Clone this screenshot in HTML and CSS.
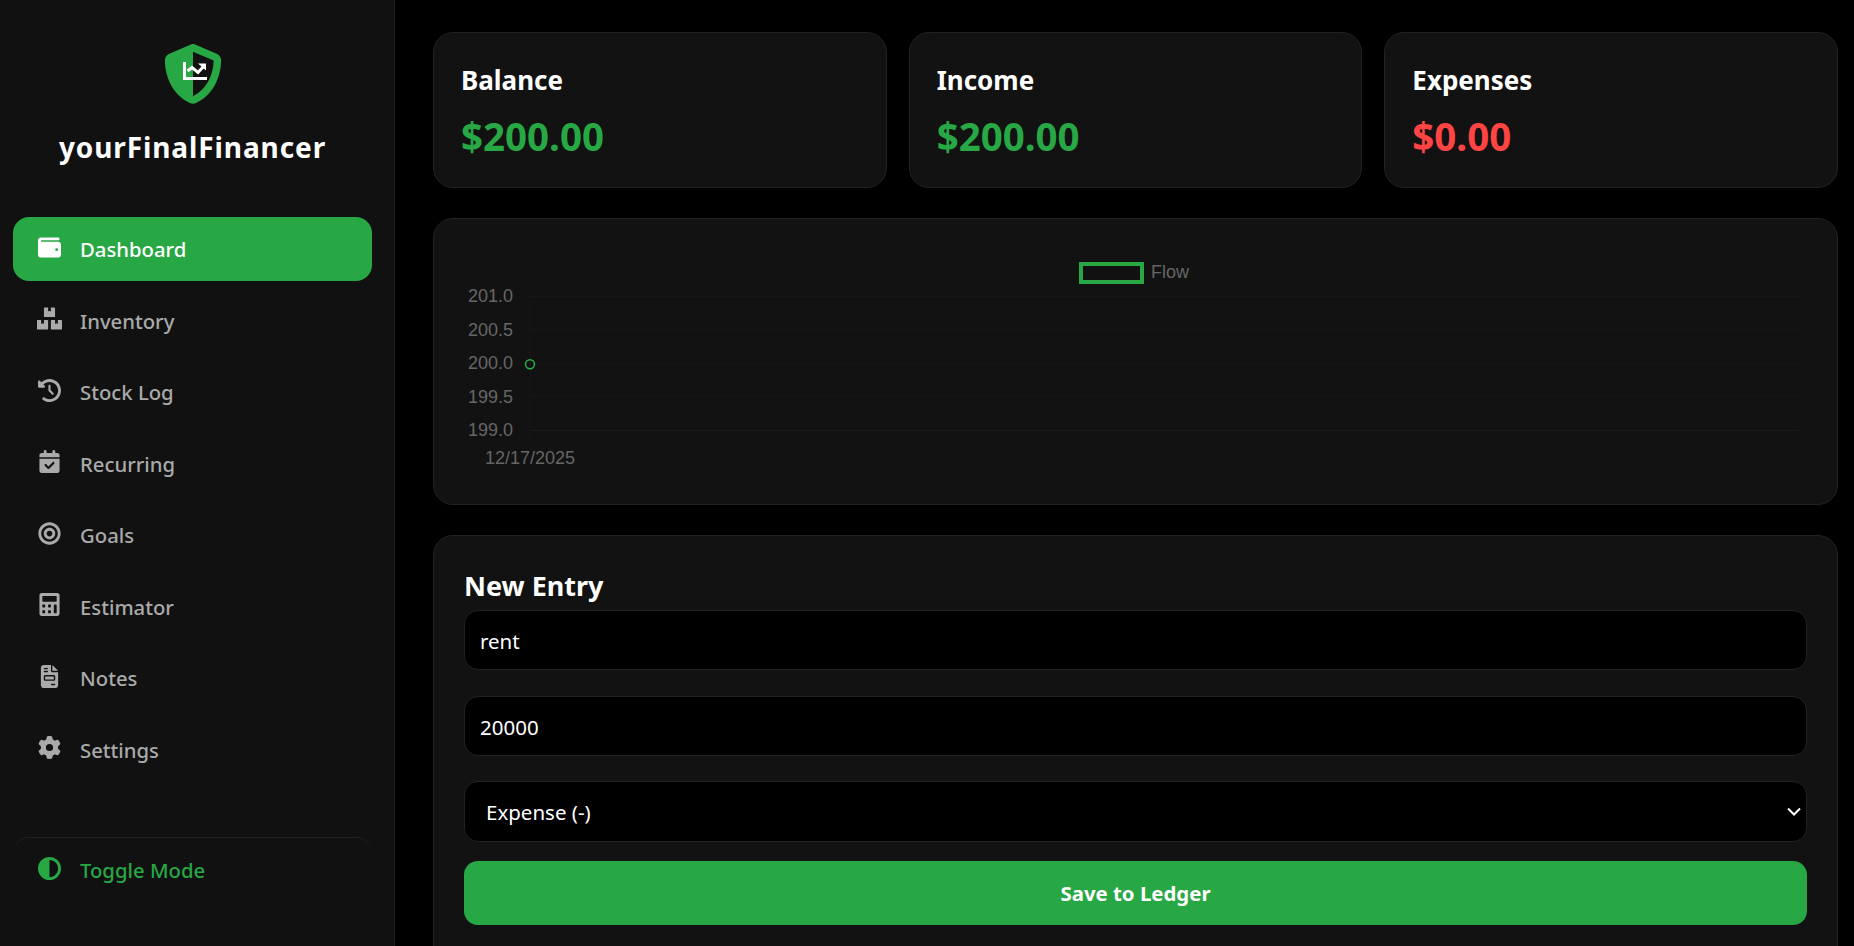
FILE: index.html
```html
<!DOCTYPE html>
<html lang="en">
<head>
<meta charset="utf-8">
<title>yourFinalFinancer</title>
<link rel="stylesheet" href="styles.css">
</head>
<body>
<div class="app">
  <aside class="sidebar">
    <div class="brand">
      <div class="logo">
        <svg class="shield" viewBox="0 0 512 512"><path d="M256 0c4.6 0 9.2 1 13.4 2.9L457.7 82.8c22 9.3 38.4 31 38.3 57.2c-.5 99.2-41.3 280.7-213.6 363.2c-16.7 8-36.1 8-52.8 0C57.3 420.7 16.5 239.2 16 140c-.1-26.2 16.3-47.9 38.3-57.2L242.7 2.9C246.8 1 251.4 0 256 0zm0 66.8V444.8C394 378 431.1 230.1 432 141.4L256 66.8l0 0z"/></svg>
        <svg class="trend" viewBox="0 0 24 18"><path class="trend-axis" d="M1.500 0V16.500H24"/><path class="trend-line" d="M4.500 9L9 5.500L15 10.500L20.500 4.500"/><path class="trend-head" d="M15 1.500H23V8.500Z"/></svg>
      </div>
      <h1 class="brand-name">yourFinalFinancer</h1>
    </div>
    <nav class="nav">
      <a class="nav-item active"><svg class="icon" viewBox="0 0 512 512"><path d="M64 32C28.700 32 0 60.700 0 96V416c0 35.300 28.700 64 64 64H448c35.300 0 64-28.700 64-64V192c0-35.300-28.700-64-64-64H80c-8.800 0-16-7.200-16-16s7.200-16 16-16H448c17.700 0 32-14.300 32-32s-14.300-32-32-32H64zM416 272a32 32 0 1 1 0 64 32 32 0 1 1 0-64z"/></svg>Dashboard</a>
      <a class="nav-item"><svg class="icon" viewBox="0 0 576 512"><path d="M560 288h-80v96l-32-21.300-32 21.300v-96h-80c-8.800 0-16 7.200-16 16v192c0 8.800 7.200 16 16 16h224c8.800 0 16-7.200 16-16V304c0-8.800-7.200-16-16-16zm-384-64h224c8.800 0 16-7.200 16-16V16c0-8.800-7.200-16-16-16h-80v96l-32-21.300L256 96V0h-80c-8.800 0-16 7.200-16 16v192c0 8.800 7.200 16 16 16zm64 64h-80v96l-32-21.300L96 384v-96H16c-8.800 0-16 7.200-16 16v192c0 8.800 7.200 16 16 16h224c8.800 0 16-7.200 16-16V304c0-8.800-7.200-16-16-16z"/></svg>Inventory</a>
      <a class="nav-item"><svg class="icon" viewBox="0 0 512 512"><path d="M75 75L41 41C25.900 25.900 0 36.600 0 57.900V168c0 13.300 10.700 24 24 24H134.100c21.400 0 32.100-25.900 17-41l-30.800-30.800C155 85.500 203 64 256 64c106 0 192 86 192 192s-86 192-192 192c-40.800 0-78.600-12.700-109.700-34.400c-14.500-10.100-34.400-6.600-44.600 7.900s-6.600 34.400 7.900 44.600C151.200 495 201.700 512 256 512c141.400 0 256-114.600 256-256S397.400 0 256 0C185.300 0 121.300 28.700 75 75zm181 53c-13.300 0-24 10.700-24 24V256c0 6.400 2.500 12.500 7 17l72 72c9.400 9.400 24.600 9.400 33.900 0s9.400-24.600 0-33.900l-65-65V152c0-13.300-10.700-24-24-24z"/></svg>Stock Log</a>
      <a class="nav-item"><svg class="icon" viewBox="0 0 448 512"><path d="M128 0c17.700 0 32 14.300 32 32V64H288V32c0-17.700 14.300-32 32-32s32 14.300 32 32V64h48c26.500 0 48 21.500 48 48v48H0V112C0 85.500 21.500 64 48 64H96V32c0-17.700 14.300-32 32-32zM0 192H448V464c0 26.500-21.500 48-48 48H48c-26.500 0-48-21.500-48-48V192zM329 305c9.400-9.400 9.400-24.600 0-33.900s-24.600-9.400-33.900 0l-95 95-47-47c-9.400-9.400-24.600-9.400-33.900 0s-9.400 24.600 0 33.900l64 64c9.400 9.400 24.600 9.400 33.900 0L329 305z"/></svg>Recurring</a>
      <a class="nav-item"><svg class="icon" viewBox="0 0 496 512"><path d="M248 8C111.030 8 0 119.030 0 256s111.030 248 248 248 248-111.030 248-248S384.970 8 248 8zm0 432c-101.690 0-184-82.290-184-184 0-101.690 82.290-184 184-184 101.690 0 184 82.290 184 184 0 101.690-82.290 184-184 184zm0-312c-70.690 0-128 57.310-128 128s57.310 128 128 128 128-57.310 128-128-57.310-128-128-128zm0 192c-35.290 0-64-28.710-64-64s28.710-64 64-64 64 28.710 64 64-28.710 64-64 64z"/></svg>Goals</a>
      <a class="nav-item"><svg class="icon" viewBox="0 0 448 512"><path d="M400 0H48C22.400 0 0 22.400 0 48v416c0 25.600 22.400 48 48 48h352c25.600 0 48-22.400 48-48V48C448 22.400 425.600 0 400 0zM128 435.200c0 6.400-6.400 12.800-12.800 12.800H76.800c-6.400 0-12.800-6.400-12.800-12.800v-38.400c0-6.400 6.400-12.800 12.800-12.800h38.400c6.400 0 12.800 6.400 12.800 12.800v38.400zm0-128c0 6.400-6.400 12.800-12.800 12.800H76.800c-6.400 0-12.800-6.400-12.800-12.800v-38.400c0-6.400 6.400-12.800 12.800-12.800h38.400c6.400 0 12.800 6.400 12.800 12.800v38.400zm128 128c0 6.400-6.400 12.800-12.800 12.800h-38.400c-6.400 0-12.800-6.400-12.800-12.800v-38.400c0-6.400 6.400-12.800 12.800-12.800h38.400c6.400 0 12.800 6.400 12.800 12.800v38.400zm0-128c0 6.400-6.400 12.800-12.800 12.800h-38.400c-6.400 0-12.800-6.400-12.800-12.800v-38.400c0-6.400 6.400-12.800 12.800-12.800h38.400c6.400 0 12.800 6.400 12.800 12.800v38.400zm128 128c0 6.400-6.400 12.800-12.800 12.800h-38.400c-6.400 0-12.800-6.400-12.800-12.800V268.800c0-6.400 6.400-12.800 12.800-12.800h38.400c6.400 0 12.800 6.400 12.800 12.800v166.400zm0-256c0 6.400-6.400 12.800-12.800 12.800H76.800c-6.400 0-12.800-6.400-12.800-12.800V76.800C64 70.400 70.400 64 76.800 64h294.400c6.400 0 12.800 6.400 12.800 12.800v102.400z"/></svg>Estimator</a>
      <a class="nav-item"><svg class="icon" viewBox="0 0 384 512"><path d="M64 0C28.700 0 0 28.700 0 64V448c0 35.300 28.700 64 64 64H320c35.300 0 64-28.700 64-64V160H256c-17.700 0-32-14.300-32-32V0H64zM256 0V128H384L256 0zM80 64h64c8.800 0 16 7.200 16 16s-7.200 16-16 16H80c-8.800 0-16-7.200-16-16s7.200-16 16-16zm0 64h64c8.800 0 16 7.200 16 16s-7.200 16-16 16H80c-8.800 0-16-7.200-16-16s7.200-16 16-16zm16 96H288c17.700 0 32 14.300 32 32v64c0 17.700-14.300 32-32 32H96c-17.700 0-32-14.300-32-32V256c0-17.700 14.300-32 32-32zm0 32v64H288V256H96zM240 416h64c8.800 0 16 7.200 16 16s-7.200 16-16 16H240c-8.800 0-16-7.200-16-16s7.200-16 16-16z"/></svg>Notes</a>
      <a class="nav-item"><svg class="icon" viewBox="0 0 512 512"><path d="M495.900 166.600c3.200 8.700 .5 18.400-6.400 24.600l-43.300 39.400c1.100 8.300 1.700 16.800 1.700 25.400s-.6 17.100-1.700 25.400l43.300 39.400c6.900 6.200 9.600 15.900 6.400 24.600c-4.400 11.900-9.700 23.300-15.800 34.300l-4.700 8.100c-6.600 11-14 21.400-22.100 31.200c-5.900 7.200-15.700 9.600-24.500 6.800l-55.700-17.700c-13.400 10.300-28.200 18.900-44 25.400l-12.500 57.100c-2 9.100-9 16.300-18.200 17.800c-13.800 2.300-28 3.500-42.500 3.500s-28.700-1.200-42.500-3.500c-9.200-1.500-16.200-8.700-18.200-17.800l-12.500-57.100c-15.800-6.500-30.600-15.100-44-25.400L83.100 425.900c-8.800 2.800-18.600 .3-24.500-6.800c-8.100-9.800-15.500-20.200-22.100-31.200l-4.700-8.100c-6.100-11-11.400-22.400-15.800-34.300c-3.200-8.700-.5-18.400 6.400-24.600l43.300-39.400C64.600 273.100 64 264.600 64 256s.6-17.100 1.700-25.400L22.400 191.200c-6.900-6.200-9.600-15.900-6.400-24.600c4.400-11.900 9.700-23.300 15.800-34.300l4.700-8.100c6.600-11 14-21.400 22.100-31.200c5.900-7.200 15.700-9.600 24.500-6.800l55.700 17.700c13.400-10.300 28.200-18.900 44-25.400l12.500-57.100c2-9.100 9-16.300 18.200-17.800C227.300 1.200 241.500 0 256 0s28.700 1.200 42.500 3.500c9.200 1.500 16.200 8.700 18.200 17.800l12.500 57.100c15.800 6.500 30.600 15.100 44 25.400l55.700-17.700c8.800-2.800 18.600-.3 24.500 6.800c8.100 9.800 15.500 20.200 22.100 31.200l4.700 8.100c6.100 11 11.400 22.400 15.800 34.300zM256 336a80 80 0 1 0 0-160 80 80 0 1 0 0 160z"/></svg>Settings</a>
    </nav>
    <div class="sidebar-foot">
      <a class="nav-item toggle"><svg class="icon" viewBox="0 0 512 512"><path d="M448 256c0-106-86-192-192-192V448c106 0 192-86 192-192zM0 256a256 256 0 1 1 512 0A256 256 0 1 1 0 256z"/></svg>Toggle Mode</a>
    </div>
  </aside>
  <main class="main">
    <section class="stats">
      <div class="card stat"><h3 class="stat-label">Balance</h3><div class="stat-value pos">$200.00</div></div>
      <div class="card stat"><h3 class="stat-label">Income</h3><div class="stat-value pos">$200.00</div></div>
      <div class="card stat"><h3 class="stat-label">Expenses</h3><div class="stat-value neg">$0.00</div></div>
    </section>
    <section class="card chart-card">
      <svg class="chart" viewBox="0 0 1403 285" width="1403" height="285">
        <g class="grid">
          <line x1="96" y1="77.500" x2="1364" y2="77.500"/>
          <line x1="96" y1="110.500" x2="1364" y2="110.500"/>
          <line x1="96" y1="144.500" x2="1364" y2="144.500"/>
          <line x1="96" y1="177.500" x2="1364" y2="177.500"/>
          <line class="grid-base" x1="96" y1="211.500" x2="1364" y2="211.500"/>
          <line x1="96" y1="77" x2="96" y2="224"/>
        </g>
        <rect class="legend-box" x="647" y="45" width="61" height="18"/>
        <text class="axis" x="717" y="59">Flow</text>
        <g class="axis end">
          <text x="79" y="83">201.0</text>
          <text x="79" y="116.500">200.5</text>
          <text x="79" y="150">200.0</text>
          <text x="79" y="183.500">199.5</text>
          <text x="79" y="217">199.0</text>
        </g>
        <text class="axis middle" x="96" y="245">12/17/2025</text>
        <circle class="point" cx="96" cy="145.300" r="4.500"/>
      </svg>
    </section>
    <section class="card form-card">
      <h2 class="form-title">New Entry</h2>
      <input class="field" type="text" value="rent">
      <input class="field" type="text" value="20000">
      <div class="select-wrap">
        <select class="field select"><option>Expense (-)</option></select>
        <svg class="chevron" viewBox="0 0 14 9"><path d="M1 1.500L7 7.500L13 1.500"/></svg>
      </div>
      <button class="save" type="button">Save to Ledger</button>
    </section>
  </main>
</div>
</body>
</html>
```
FILE: styles.css
```css
* { box-sizing: border-box; }
html, body { margin: 0; height: 100%; overflow: hidden; background: #000; }
body { font-family: "Noto Sans", "Open Sans", sans-serif; color: #fff; }
.app { display: flex; height: 946px; overflow: hidden; }

.sidebar { width: 395px; flex: none; background: #111; border-right: 1px solid #222; display: flex; flex-direction: column; padding: 44px 22px 0 13px; }
.brand { display: flex; flex-direction: column; align-items: center; }
.logo { position: relative; width: 60px; height: 60px; }
.shield { width: 60px; height: 60px; fill: #28a745; display: block; }
.trend { position: absolute; left: 20px; top: 18px; width: 24px; height: 18px; overflow: visible; }
.trend-axis { fill: none; stroke: #fff; stroke-width: 3; }
.trend-line { fill: none; stroke: #fff; stroke-width: 3; }
.trend-head { fill: #fff; }
.brand-name { margin: 25px 0 0; font-size: 28px; line-height: 37px; font-weight: 700; letter-spacing: 0.900px; white-space: nowrap; }
.nav { display: flex; flex-direction: column; gap: 7.500px; margin-top: 51px; }
.nav-item { display: flex; align-items: center; gap: 18px; height: 64px; padding: 0 24px; border-radius: 16px; font-size: 20.300px; font-weight: 500; color: #aaa; }
.nav-item .icon { width: 25px; height: 23px; fill: currentColor; flex: none; margin-top: -4px; }
.nav-item.active { background: #28a745; color: #fff; }
.sidebar-foot { margin-top: auto; margin-bottom: 44px; border-top: 1px solid #222; border-radius: 16px 16px 0 0; }
.nav-item.toggle { color: #28a745; }

.main { flex: 1; min-width: 0; padding: 32px 16px 0 38px; display: flex; flex-direction: column; gap: 30px; }
.card { background: #121212; border: 1px solid #222; border-radius: 20px; }
.stats { display: grid; grid-template-columns: repeat(3, 1fr); gap: 22px; }
.stat { height: 156px; padding: 29px 27px 0; }
.stat-label { margin: 0; font-size: 26px; line-height: 36px; font-weight: 700; }
.stat-value { margin-top: 12px; font-size: 38.500px; line-height: 52px; font-weight: 700; }
.pos { color: #28a745; }
.neg { color: #ff4444; }

.chart-card { height: 287px; flex: none; }
.chart { display: block; }
.grid line { stroke: #171717; stroke-width: 1; }
.grid .grid-base { stroke: #1a1a1a; }
.legend-box { fill: #111; stroke: #28a745; stroke-width: 4; }
.axis { font-family: "Liberation Sans", Arial, sans-serif; font-size: 18px; fill: #666; }
.end text { text-anchor: end; }
.middle { text-anchor: middle; }
.point { fill: none; stroke: #28b446; stroke-width: 1.500; }

.form-card { flex: none; height: 440px; padding: 31px 30px; display: flex; flex-direction: column; align-items: stretch; }
.form-title { margin: 0 0 6px; font-size: 27px; line-height: 37px; font-weight: 700; }
.field { display: block; width: 100%; height: 60px; background: #000; border: 1px solid #222; border-radius: 14px; color: #fff; font-family: inherit; font-size: 20.500px; padding: 2px 15px 0; margin-bottom: 25.500px; outline: none; }
.select-wrap { position: relative; }
.select { height: 61px; margin-bottom: 19px; padding: 0 15px 0 21px; appearance: none; -webkit-appearance: none; }
.chevron { position: absolute; right: 6px; top: 26px; width: 14px; height: 9px; fill: none; stroke: #fff; stroke-width: 2; }
.save { height: 64px; border: 0; border-radius: 14px; background: #28a745; color: #fff; font-family: inherit; font-size: 20.400px; font-weight: 700; }
```
